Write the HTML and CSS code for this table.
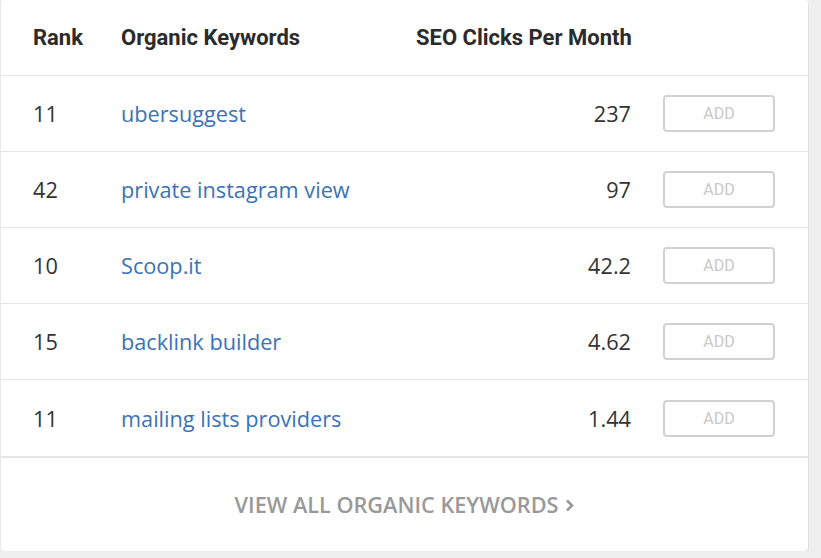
FILE: index.html
```html
<!DOCTYPE html>
<html>
<head>
<meta charset="utf-8">
<link rel="stylesheet" href="styles.css">
</head>
<body>
<div class="card">
  <div class="row head">
    <div class="c-rank">Rank</div>
    <div class="c-kw">Organic Keywords</div>
    <div class="c-clicks">SEO Clicks Per Month</div>
    <div class="c-btn"></div>
  </div>
  <div class="row">
    <div class="c-rank">11</div>
    <div class="c-kw"><a href="#">ubersuggest</a></div>
    <div class="c-clicks num">237</div>
    <div class="c-btn"><button class="add">ADD</button></div>
  </div>
  <div class="row">
    <div class="c-rank">42</div>
    <div class="c-kw"><a href="#">private instagram view</a></div>
    <div class="c-clicks num">97</div>
    <div class="c-btn"><button class="add">ADD</button></div>
  </div>
  <div class="row">
    <div class="c-rank">10</div>
    <div class="c-kw"><a href="#">Scoop.it</a></div>
    <div class="c-clicks num">42.2</div>
    <div class="c-btn"><button class="add">ADD</button></div>
  </div>
  <div class="row">
    <div class="c-rank">15</div>
    <div class="c-kw"><a href="#">backlink builder</a></div>
    <div class="c-clicks num">4.62</div>
    <div class="c-btn"><button class="add">ADD</button></div>
  </div>
  <div class="row last">
    <div class="c-rank">11</div>
    <div class="c-kw"><a href="#">mailing lists providers</a></div>
    <div class="c-clicks num">1.44</div>
    <div class="c-btn"><button class="add">ADD</button></div>
  </div>
  <div class="footer">
    <a href="#" class="viewall">VIEW ALL ORGANIC KEYWORDS<svg class="chev" width="9" height="13" viewBox="0 0 9 13"><polyline points="2,1.5 7,6.5 2,11.5" fill="none" stroke="#999" stroke-width="2.6"/></svg></a>
  </div>
</div>
</body>
</html>
```

FILE: styles.css
```css
html, body {
  margin: 0;
  padding: 0;
  background: #efefef;
}
body {
  font-family: "Open Sans", "Liberation Sans", sans-serif;
  color: #333;
}
.card {
  width: 808px;
  height: 551px;
  box-sizing: border-box;
  background: #fff;
  border-left: 1px solid #e9e9e9;
  border-radius: 4px;
  box-shadow: 1px 2px 0 #e2e2e2;
  display: flex;
  flex-direction: column;
}
.row {
  display: grid;
  grid-template-columns: 88px 295px 215px 1fr;
  align-items: center;
  padding: 0 33px 0 32px;
  height: 76px;
  box-sizing: border-box;
  border-bottom: 1px solid #e6e6e6;
  font-size: 21.7px;
  white-space: nowrap;
}
.row.head {
  font-family: Roboto, "Liberation Sans", sans-serif;
  font-weight: 700;
  font-size: 22px;
  color: #2b2b2b;
}
.row.last {
  border-bottom: 2px solid #e6e6e6;
  height: 78px;
}
.c-kw a {
  color: #3a72b8;
  text-decoration: none;
}
.num {
  text-align: right;
}
.c-btn {
  display: flex;
  justify-content: flex-end;
}
.add {
  width: 112px;
  height: 37px;
  box-sizing: border-box;
  border: 2px solid #d2d2d2;
  border-radius: 4px;
  background: #fff;
  color: #c8c8c8;
  font-family: Roboto, "Liberation Sans", sans-serif;
  font-size: 16px;
  padding: 0;
}
.footer {
  flex: 1;
  display: flex;
  align-items: center;
  justify-content: center;
}
.viewall {
  color: #999;
  text-decoration: none;
  font-weight: 600;
  font-size: 21.7px;
  display: flex;
  align-items: center;
  gap: 7px;
}
.chev {
  display: block;
  margin-top: 1px;
}
```
